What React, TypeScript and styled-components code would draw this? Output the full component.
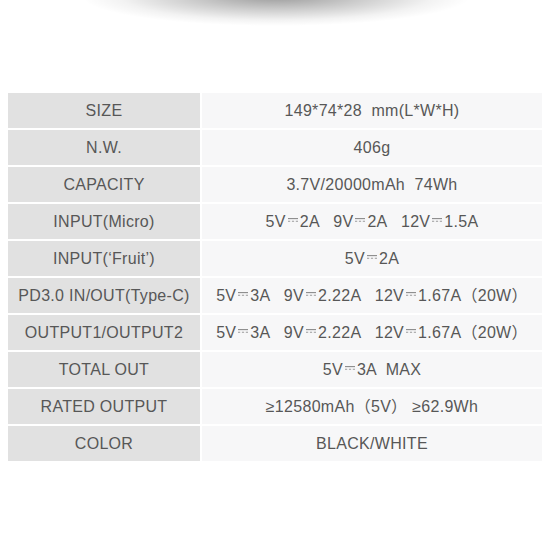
import React from "react";
import styled, { createGlobalStyle } from "styled-components";

const GlobalStyle = createGlobalStyle`
  html, body {
    margin: 0;
    padding: 0;
    background: #ffffff;
  }
  body {
    font-family: "Liberation Sans", Arial, "Noto Sans CJK SC", sans-serif;
  }
`;

const Page = styled.div`
  width: 560px;
  height: 560px;
  overflow: hidden;
  background: #fff;
`;

const Shadow = styled.div`
  height: 93px;
  background: radial-gradient(
    ellipse 195px 30px at 276px -4px,
    rgba(0, 0, 0, 0.4) 0%,
    rgba(0, 0, 0, 0.2) 45%,
    rgba(0, 0, 0, 0.05) 80%,
    rgba(0, 0, 0, 0) 100%
  );
`;

const Table = styled.div`
  display: grid;
  grid-template-columns: 192px 340px;
  grid-auto-rows: 35px;
  column-gap: 2px;
  row-gap: 2px;
  margin: 0 0 0 8px;
`;

const Cell = styled.div<{ $head?: boolean }>`
  display: flex;
  align-items: center;
  justify-content: center;
  background: ${(p) => (p.$head ? "#e1e1e1" : "#f7f7f8")};
  color: #575757;
  font-size: 16px;
  letter-spacing: 0.3px;
  padding-top: 1px;
`;

const Text = styled.span`
  white-space: pre;
  line-height: 20px;
`;

const DcMark = styled.svg`
  width: 10px;
  height: 4px;
  margin: 0 2px;
  vertical-align: 5px;
`;

const Dc = () => (
  <DcMark viewBox="0 0 10 4">
    <line x1="0" y1="0.6" x2="10" y2="0.6" stroke="#8a8a8a" strokeWidth="1.1" />
    <line
      x1="0"
      y1="3.3"
      x2="10"
      y2="3.3"
      stroke="#9a9a9a"
      strokeWidth="1.1"
      strokeDasharray="2.2 1.7"
    />
  </DcMark>
);

const rows: [string, string][] = [
  ["SIZE", "149*74*28  mm(L*W*H)"],
  ["N.W.", "406g"],
  ["CAPACITY", "3.7V/20000mAh  74Wh"],
  ["INPUT(Micro)", "5V⎓2A   9V⎓2A   12V⎓1.5A"],
  ["INPUT(‘Fruit’)", "5V⎓2A"],
  ["PD3.0 IN/OUT(Type-C)", "5V⎓3A   9V⎓2.22A   12V⎓1.67A（20W）"],
  ["OUTPUT1/OUTPUT2", "5V⎓3A   9V⎓2.22A   12V⎓1.67A（20W）"],
  ["TOTAL OUT", "5V⎓3A  MAX"],
  ["RATED OUTPUT", "≥12580mAh（5V） ≥62.9Wh"],
  ["COLOR", "BLACK/WHITE"],
];

const renderValue = (v: string) =>
  v.split("⎓").map((part, i) => (
    <React.Fragment key={i}>
      {i > 0 && <Dc />}
      {part}
    </React.Fragment>
  ));

export default function App() {
  return (
    <Page>
      <GlobalStyle />
      <Shadow />
      <Table>
        {rows.map(([label, value]) => (
          <React.Fragment key={label}>
            <Cell $head>
              <Text>{label}</Text>
            </Cell>
            <Cell>
              <Text>{renderValue(value)}</Text>
            </Cell>
          </React.Fragment>
        ))}
      </Table>
    </Page>
  );
}
